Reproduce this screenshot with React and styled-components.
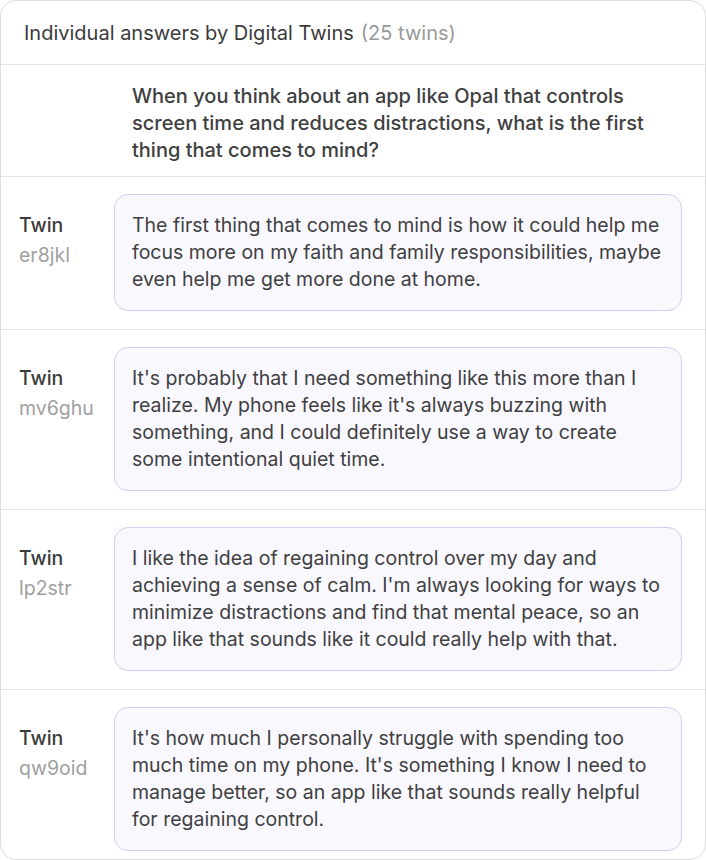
import React from "react";
import styled, { createGlobalStyle } from "styled-components";

const Global = createGlobalStyle`
  html, body { margin: 0; padding: 0; background: #fff; }
  body { font-family: Inter, "Noto Sans", sans-serif; -webkit-font-smoothing: antialiased; }
  * { box-sizing: border-box; }
`;

const Card = styled.div`
  width: 706px;
  border: 1px solid #dedede;
  border-radius: 16px;
  background: #fff;
  overflow: hidden;
`;

const Header = styled.div`
  height: 64px;
  display: flex;
  align-items: center;
  gap: 7px;
  padding: 0 23px;
  border-bottom: 1px solid #e2e2e2;
  font-size: 20px;
  color: #3b3b3b;
`;

const Count = styled.span`
  color: #9a9a9a;
`;

const Question = styled.div`
  padding: 18px 40px 12px 131px;
  border-bottom: 1px solid #e2e2e2;
  font-size: 20px;
  font-weight: 500;
  line-height: 27px;
  color: #404040;
`;

const Row = styled.div`
  display: flex;
  align-items: flex-start;
  padding: 17px 23px ${(p) => (p.$last ? "8px" : "18px")} 18px;
  border-bottom: ${(p) => (p.$last ? "none" : "1px solid #e2e2e2")};
`;

const Label = styled.div`
  width: 95px;
  flex-shrink: 0;
  padding-top: 16px;
  display: flex;
  flex-direction: column;
  font-size: 19.5px;
  line-height: 30px;
`;

const Name = styled.span`
  color: #3b3b3b;
  font-weight: 500;
`;

const Id = styled.span`
  color: #a0a0a0;
`;

const Bubble = styled.div`
  flex: 1;
  background: #f9f8fe;
  border: 1px solid #d3ccf4;
  border-radius: 14px;
  padding: 17px 17px;
  font-size: 19.5px;
  line-height: 27px;
  color: #404040;
`;

const answers = [
  {
    id: "er8jkl",
    text: "The first thing that comes to mind is how it could help me focus more on my faith and family responsibilities, maybe even help me get more done at home.",
  },
  {
    id: "mv6ghu",
    text: "It's probably that I need something like this more than I realize. My phone feels like it's always buzzing with something, and I could definitely use a way to create some intentional quiet time.",
  },
  {
    id: "lp2str",
    text: "I like the idea of regaining control over my day and achieving a sense of calm. I'm always looking for ways to minimize distractions and find that mental peace, so an app like that sounds like it could really help with that.",
  },
  {
    id: "qw9oid",
    text: "It's how much I personally struggle with spending too much time on my phone. It's something I know I need to manage better, so an app like that sounds really helpful for regaining control.",
  },
];

export default function App() {
  return (
    <>
      <Global />
      <Card>
        <Header>
          <span>Individual answers by Digital Twins</span>
          <Count>(25 twins)</Count>
        </Header>
        <Question>
          When you think about an app like Opal that controls screen time and reduces distractions, what is the first thing that comes to mind?
        </Question>
        {answers.map((a, i) => (
          <Row key={a.id} $last={i === answers.length - 1}>
            <Label>
              <Name>Twin</Name>
              <Id>{a.id}</Id>
            </Label>
            <Bubble>{a.text}</Bubble>
          </Row>
        ))}
      </Card>
    </>
  );
}
